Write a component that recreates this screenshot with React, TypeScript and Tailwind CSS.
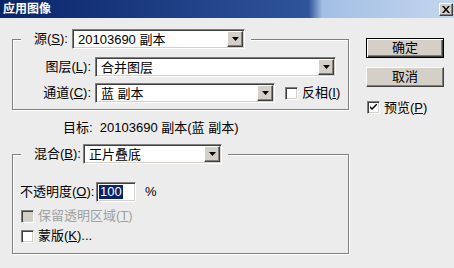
import type { ReactNode } from 'react';

const FONT = "font-['Liberation_Sans','Noto_Sans_CJK_SC',sans-serif]";

function Mn({ children }: { children: ReactNode }) {
  return <span className="underline underline-offset-[1px]">{children}</span>;
}

function DropButton() {
  return (
    <span className="flex h-4 w-4 shrink-0 items-center justify-center border border-t-white border-l-white border-b-[#404040] border-r-[#404040] bg-[#d4d0c8] shadow-[inset_-1px_-1px_0_#808080]">
      <svg width="7" height="4" viewBox="0 0 7 4" aria-hidden="true">
        <path d="M0 0h7L3.5 4z" fill="#000" />
      </svg>
    </span>
  );
}

function Combo({ value, className }: { value: string; className: string }) {
  return (
    <div
      className={`flex h-5 items-center border border-t-[#808080] border-l-[#808080] border-b-white border-r-white bg-white p-px shadow-[inset_1px_1px_0_#404040,inset_-1px_-1px_0_#d4d0c8] ${className}`}
    >
      <span className="flex-1 truncate pl-[4px] leading-none">{value}</span>
      <DropButton />
    </div>
  );
}

function Check({ checked = false, disabled = false }: { checked?: boolean; disabled?: boolean }) {
  return (
    <span
      className={`flex h-[13px] w-[13px] shrink-0 items-center justify-center border border-t-[#808080] border-l-[#808080] border-b-white border-r-white shadow-[inset_1px_1px_0_#404040,inset_-1px_-1px_0_#d4d0c8] ${
        disabled ? 'bg-[#d4d0c8]' : 'bg-white'
      }`}
    >
      {checked && (
        <svg width="7" height="7" viewBox="0 0 7 7" aria-hidden="true">
          <path d="M0 2v2l2 2 5-5V-1L2 4z" fill="#000" />
        </svg>
      )}
    </span>
  );
}

export default function App() {
  return (
    <div className={`h-[268px] w-[454px] overflow-hidden bg-[#ececec] text-[13px] text-black ${FONT}`}>
      {/* title bar */}
      <div className="flex h-[18px] items-center justify-between bg-[linear-gradient(to_right,#0a246a_0%,#2f549a_68%,#a2bfe4_71%,#c3d6ee_100%)] pl-[3px] pr-[1px]">
        <span className="text-[12px] font-bold leading-none text-white">应用图像</span>
        <span className="flex h-[13px] w-[14px] items-center justify-center border border-t-white border-l-white border-b-[#404040] border-r-[#404040] bg-[#d4d0c8] shadow-[inset_-1px_-1px_0_#808080]">
          <svg width="8" height="7" viewBox="0 0 8 7" aria-hidden="true">
            <path d="M0 0h2l2 2.5L6 0h2L5 3.5 8 7H6L4 4.5 2 7H0l3-3.5z" fill="#000" />
          </svg>
        </span>
      </div>

      <div className="flex pl-[12px] pt-[11px]">
        {/* left column */}
        <div className="flex w-[337px] flex-col">
          <fieldset className="m-0 border border-[#808080] p-0 pb-[6px] shadow-[inset_1px_1px_0_#fff,1px_1px_0_#fff]">
            <legend className="ml-[8px] flex h-5 items-center bg-[#ececec] pl-[13px] pr-[6px]">
              <span className="w-[38px]">
                源(<Mn>S</Mn>):
              </span>
              <Combo value="20103690 副本" className="w-[173px]" />
            </legend>
            <div className="mt-[8px] flex h-5 items-center">
              <span className="w-[82px] pr-[4px] text-right">
                图层(<Mn>L</Mn>):
              </span>
              <Combo value="合并图层" className="w-[241px]" />
            </div>
            <div className="mt-[6px] flex h-5 items-center">
              <span className="w-[82px] pr-[4px] text-right">
                通道(<Mn>C</Mn>):
              </span>
              <Combo value="蓝 副本" className="w-[180px]" />
              <span className="ml-[10px] flex items-center gap-[4px]">
                <Check />
                <span>
                  反相(<Mn>I</Mn>)
                </span>
              </span>
            </div>
          </fieldset>

          <div className="mt-[8px] flex h-5 items-center pl-[51px]">目标:&nbsp; 20103690 副本(蓝 副本)</div>

          <fieldset className="m-0 mt-[6px] border border-[#808080] p-0 pb-[7px] shadow-[inset_1px_1px_0_#fff,1px_1px_0_#fff]">
            <legend className="ml-[8px] flex h-5 items-center bg-[#ececec] pl-[13px] pr-[6px]">
              <span className="w-[49px]">
                混合(<Mn>B</Mn>):
              </span>
              <Combo value="正片叠底" className="w-[139px]" />
            </legend>
            <div className="mt-[18px] flex h-5 items-center pl-[7px]">
              <span className="w-[76px]">
                不透明度(<Mn>O</Mn>):
              </span>
              <span className="flex h-5 w-[40px] items-center border border-t-[#808080] border-l-[#808080] border-b-white border-r-white bg-white pl-[2px] shadow-[inset_1px_1px_0_#404040,inset_-1px_-1px_0_#d4d0c8]">
                <span className="bg-[#0a246a] px-px leading-[14px] text-white">100</span>
              </span>
              <span className="ml-[9px]">%</span>
            </div>
            <div className="mt-[4px] flex h-5 items-center gap-[4px] pl-[8px] text-[#a0a0a0]">
              <Check disabled />
              <span>
                保留透明区域(<Mn>T</Mn>)
              </span>
            </div>
            <div className="flex h-5 items-center gap-[4px] pl-[8px]">
              <Check />
              <span>
                蒙版(<Mn>K</Mn>)...
              </span>
            </div>
          </fieldset>
        </div>

        {/* right column */}
        <div className="ml-[17px] flex w-[78px] flex-col pt-[9px]">
          <button
            type="button"
            className="flex h-5 items-center justify-center border border-black bg-[#d4d0c8] shadow-[inset_1px_1px_0_#fff,inset_-1px_-1px_0_#404040,inset_-2px_-2px_0_#808080]"
          >
            确定
          </button>
          <button
            type="button"
            className="mt-[9px] flex h-5 items-center justify-center border border-t-white border-l-white border-b-[#404040] border-r-[#404040] bg-[#d4d0c8] shadow-[inset_-1px_-1px_0_#808080]"
          >
            取消
          </button>
          <div className="mt-[13px] flex h-[15px] items-center gap-[4px] pl-px">
            <Check checked />
            <span>
              预览(<Mn>P</Mn>)
            </span>
          </div>
        </div>
      </div>
    </div>
  );
}
